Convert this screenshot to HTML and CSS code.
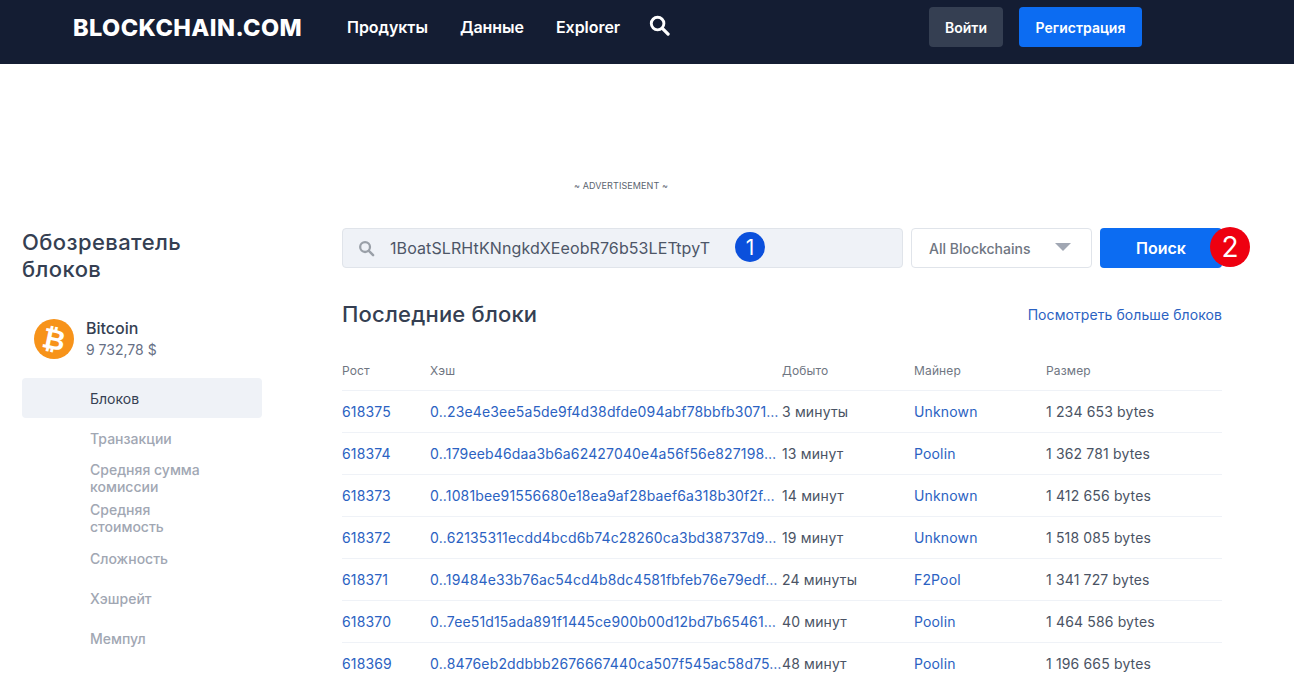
FILE: index.html
```html
<!DOCTYPE html>
<html lang="ru">
<head>
  <meta charset="UTF-8">
  <title>Обозреватель блоков</title>
  <link rel="stylesheet" href="styles.css">
</head>
<body>
  <header class="topbar">
    <a class="logo" href="#">BLOCKCHAIN.COM</a>
    <nav class="topnav">
      <a href="#">Продукты</a>
      <a href="#">Данные</a>
      <a href="#">Explorer</a>
      <svg class="topnav-search" viewBox="0 0 22 22" width="21" height="21">
        <circle cx="9" cy="9" r="6.6" fill="none" stroke="#fff" stroke-width="3"/>
        <path d="M14 14l6 6" stroke="#fff" stroke-width="3.4" stroke-linecap="round"/>
      </svg>
    </nav>
    <div class="auth">
      <a class="btn btn-dark" href="#">Войти</a>
      <a class="btn btn-blue" href="#">Регистрация</a>
    </div>
  </header>

  <div class="ad-slot"><span>~ ADVERTISEMENT ~</span></div>

  <div class="layout">
    <aside class="sidebar">
      <h2 class="sidebar-title">Обозреватель блоков</h2>
      <div class="coin">
        <svg class="coin-icon" viewBox="0 0 40 40" width="40" height="40">
          <circle cx="20" cy="20" r="20" fill="#f7931a"/>
          <text x="20" y="30" text-anchor="middle" transform="rotate(12 20 20)" class="coin-sign">₿</text>
        </svg>
        <div>
          <div class="coin-name">Bitcoin</div>
          <div class="coin-price">9 732,78 $</div>
        </div>
      </div>
      <ul class="side-menu">
        <li class="active">Блоков</li>
        <li>Транзакции</li>
        <li class="two-lines">Средняя сумма комиссии</li>
        <li class="two-lines">Средняя стоимость</li>
        <li>Сложность</li>
        <li>Хэшрейт</li>
        <li>Мемпул</li>
      </ul>
    </aside>

    <main class="content">
      <div class="search-row">
        <div class="search-box">
          <svg viewBox="0 0 18 18" width="17" height="17">
            <circle cx="7.5" cy="7.5" r="5.2" fill="none" stroke="#9aa0a8" stroke-width="2.4"/>
            <path d="M11.5 11.5l4.5 4.5" stroke="#9aa0a8" stroke-width="2.6" stroke-linecap="round"/>
          </svg>
          <span class="search-value">1BoatSLRHtKNngkdXEeobR76b53LETtpyT</span>
          <span class="marker marker-one">1</span>
        </div>
        <div class="chain-select">
          <span>All Blockchains</span>
          <i class="caret"></i>
        </div>
        <div class="search-btn">
          Поиск
          <span class="marker marker-two">2</span>
        </div>
      </div>

      <div class="blocks-head">
        <h2>Последние блоки</h2>
        <a href="#">Посмотреть больше блоков</a>
      </div>

      <table class="blocks">
        <thead>
          <tr><th>Рост</th><th>Хэш</th><th>Добыто</th><th>Майнер</th><th>Размер</th></tr>
        </thead>
        <tbody>
          <tr>
            <td><a href="#">618375</a></td>
            <td><a href="#">0..23e4e3ee5a5de9f4d38dfde094abf78bbfb3071…</a></td>
            <td>3 минуты</td>
            <td><a href="#">Unknown</a></td>
            <td>1 234 653 bytes</td>
          </tr>
          <tr>
            <td><a href="#">618374</a></td>
            <td><a href="#">0..179eeb46daa3b6a62427040e4a56f56e827198…</a></td>
            <td>13 минут</td>
            <td><a href="#">Poolin</a></td>
            <td>1 362 781 bytes</td>
          </tr>
          <tr>
            <td><a href="#">618373</a></td>
            <td><a href="#">0..1081bee91556680e18ea9af28baef6a318b30f2f…</a></td>
            <td>14 минут</td>
            <td><a href="#">Unknown</a></td>
            <td>1 412 656 bytes</td>
          </tr>
          <tr>
            <td><a href="#">618372</a></td>
            <td><a href="#">0..62135311ecdd4bcd6b74c28260ca3bd38737d9…</a></td>
            <td>19 минут</td>
            <td><a href="#">Unknown</a></td>
            <td>1 518 085 bytes</td>
          </tr>
          <tr>
            <td><a href="#">618371</a></td>
            <td><a href="#">0..19484e33b76ac54cd4b8dc4581fbfeb76e79edf…</a></td>
            <td>24 минуты</td>
            <td><a href="#">F2Pool</a></td>
            <td>1 341 727 bytes</td>
          </tr>
          <tr>
            <td><a href="#">618370</a></td>
            <td><a href="#">0..7ee51d15ada891f1445ce900b00d12bd7b65461…</a></td>
            <td>40 минут</td>
            <td><a href="#">Poolin</a></td>
            <td>1 464 586 bytes</td>
          </tr>
          <tr>
            <td><a href="#">618369</a></td>
            <td><a href="#">0..8476eb2ddbbb2676667440ca507f545ac58d75…</a></td>
            <td>48 минут</td>
            <td><a href="#">Poolin</a></td>
            <td>1 196 665 bytes</td>
          </tr>
        </tbody>
      </table>
    </main>
  </div>
</body>
</html>
```

FILE: styles.css
```css
* {
  box-sizing: border-box;
}

html, body {
  height: 674px;
  overflow: hidden;
}

body {
  margin: 0;
  background: #fff;
  font-family: Inter, "Noto Sans", sans-serif;
  color: #353f52;
}

a {
  text-decoration: none;
}

/* top bar */
.topbar {
  display: flex;
  align-items: center;
  height: 64px;
  padding: 0 0 10px 73px;
  background: #141d33;
}

.logo {
  width: 274px;
  color: #fff;
  font-size: 23.5px;
  font-weight: 800;
  letter-spacing: 0.43px;
}

.topnav {
  display: flex;
  align-items: center;
  gap: 32px;
  width: 582px;
}

.topnav a {
  color: #fff;
  font-size: 16px;
  font-weight: 600;
  letter-spacing: -0.05px;
}

.topnav-search {
  margin-left: -3px;
  margin-top: -3px;
}

.auth {
  display: flex;
  gap: 16px;
}

.btn {
  display: flex;
  align-items: center;
  justify-content: center;
  height: 40px;
  border-radius: 4px;
  color: #fff;
  font-size: 14px;
  font-weight: 600;
}

.btn-dark {
  width: 74px;
  background: #353f52;
}

.btn-blue {
  width: 123px;
  background: #0c6cf2;
}

.ad-slot {
  display: flex;
  justify-content: center;
  align-items: flex-end;
  height: 127px;
  padding-right: 52px;
}

.ad-slot span {
  color: #5a6470;
  font-size: 9px;
  line-height: 11px;
  letter-spacing: 0.1px;
}

/* page columns */
.layout {
  display: flex;
  padding: 37px 72px 0 22px;
}

.sidebar {
  flex: none;
  width: 320px;
}

.sidebar-title {
  width: 200px;
  margin: 1px 0 0;
  font-size: 22px;
  font-weight: 500;
  line-height: 27px;
  letter-spacing: 0.4px;
}

.coin {
  display: flex;
  align-items: center;
  gap: 12px;
  margin: 34px 0 0 12px;
}

.coin-sign {
  fill: #fff;
  font-family: "DejaVu Sans", sans-serif;
  font-size: 28px;
  font-weight: 700;
}

.coin-name {
  font-size: 16px;
  font-weight: 500;
  line-height: 22px;
}

.coin-price {
  color: #677085;
  font-size: 14px;
  line-height: 21px;
}

.side-menu {
  width: 240px;
  margin: 18px 0 0;
  padding: 0;
  list-style: none;
}

.side-menu li {
  display: flex;
  align-items: center;
  height: 40px;
  padding: 0 50px 0 68px;
  border-radius: 4px;
  color: #a1a7b3;
  font-size: 14px;
  font-weight: 500;
  line-height: 17px;
}

.side-menu li.active {
  background: #eff2f7;
  color: #353f52;
  font-weight: 400;
}

.content {
  flex: 1;
  min-width: 0;
}

/* search controls */
.search-row {
  display: flex;
  gap: 8px;
  height: 40px;
}

.search-box {
  position: relative;
  display: flex;
  align-items: center;
  flex: none;
  width: 561px;
  padding-left: 15px;
  border: 1px solid #e0e4ea;
  border-radius: 4px;
  background: #eff2f7;
}

.search-value {
  margin-left: 15px;
  color: #4d5667;
  font-size: 16px;
  letter-spacing: 0.1px;
}

.chain-select {
  display: flex;
  align-items: center;
  justify-content: space-between;
  flex: none;
  width: 181px;
  padding: 0 20px 0 17px;
  border: 1px solid #e0e4ea;
  border-radius: 4px;
  color: #6f7682;
  font-size: 14px;
  font-weight: 500;
}

.caret {
  width: 0;
  height: 0;
  margin-top: -3px;
  border-left: 8px solid transparent;
  border-right: 8px solid transparent;
  border-top: 8px solid #a1a7b3;
}

.search-btn {
  position: relative;
  display: flex;
  align-items: center;
  justify-content: center;
  flex: none;
  width: 122px;
  border-radius: 4px;
  background: #0c6cf2;
  color: #fff;
  font-size: 16px;
  font-weight: 600;
}

/* numbered markers laid over the controls */
.marker {
  position: absolute;
  display: flex;
  align-items: center;
  justify-content: center;
  border-radius: 50%;
  color: #fff;
  font-weight: 400;
}

.marker-one {
  top: 3px;
  left: 392px;
  width: 30px;
  height: 30px;
  background: #0b50dc;
  font-size: 21px;
}

.marker-two {
  top: -1px;
  left: 110px;
  width: 40px;
  height: 40px;
  background: #ee0010;
  font-size: 28px;
}

/* latest blocks */
.blocks-head {
  display: flex;
  align-items: center;
  justify-content: space-between;
  margin-top: 32px;
  height: 28px;
}

.blocks-head h2 {
  margin: 0;
  font-size: 22px;
  font-weight: 500;
  letter-spacing: 0.2px;
}

.blocks-head a {
  color: #2b62c2;
  font-size: 14px;
  letter-spacing: 0.08px;
}

.blocks {
  width: 100%;
  margin-top: 23px;
  border-collapse: collapse;
  table-layout: fixed;
  font-size: 14px;
  letter-spacing: 0.15px;
}

.blocks th:nth-child(1) { width: 88px; }
.blocks th:nth-child(2) { width: 352px; }
.blocks th:nth-child(3) { width: 132px; }
.blocks th:nth-child(4) { width: 132px; }

.blocks th {
  height: 39px;
  padding: 0;
  color: #6f7682;
  font-size: 12px;
  font-weight: 400;
  text-align: left;
}

.blocks td {
  height: 42px;
  padding: 0;
  border-top: 1px solid #eff2f7;
  color: #4a5364;
  white-space: nowrap;
}

.blocks a {
  color: #2b62c2;
}
```
